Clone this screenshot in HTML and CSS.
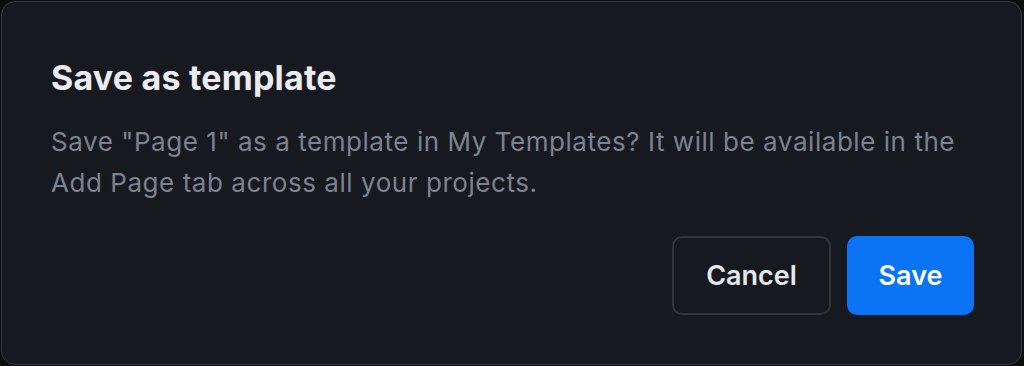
FILE: index.html
```html
<!DOCTYPE html>
<html lang="en">
<head>
  <meta charset="UTF-8" />
  <title>Save as template</title>
  <link rel="stylesheet" href="styles.css">
</head>
<body>
  <div class="backdrop">
    <div class="dialog">
      <h2 class="dialog-title">Save as template</h2>
      <p class="dialog-text">Save "Page 1" as a template in My Templates? It will be available in the Add Page tab across all your projects.</p>
      <div class="dialog-actions">
        <button class="btn btn-secondary">Cancel</button>
        <button class="btn btn-primary">Save</button>
      </div>
    </div>
  </div>
</body>
</html>
```

FILE: styles.css
```css
* {
  box-sizing: border-box;
  margin: 0;
  padding: 0;
}

body {
  font-family: Inter, 'Noto Sans', sans-serif;
  background: #0c0d10;
  width: 1024px;
  height: 366px;
  overflow: hidden;
}

.backdrop {
  padding: 1px 2px 1px 1px;
}

.dialog {
  height: 364px;
  background: #171920;
  border: 1px solid #383a40;
  border-radius: 14px;
  padding: 54px 47px 49px 49px;
  display: flex;
  flex-direction: column;
}

.dialog-title {
  font-size: 34px;
  line-height: 44px;
  font-weight: 700;
  letter-spacing: 0.2px;
  color: #ececf0;
}

.dialog-text {
  margin-top: 21px;
  max-width: 925px;
  font-size: 26px;
  line-height: 41px;
  letter-spacing: 0.55px;
  color: #7c8290;
}

.dialog-actions {
  margin-top: auto;
  display: flex;
  justify-content: flex-end;
  gap: 16px;
}

.btn {
  height: 79px;
  border-radius: 10px;
  font-family: inherit;
  font-size: 27px;
  font-weight: 600;
  cursor: pointer;
}

.btn-secondary {
  width: 159px;
  background: transparent;
  border: 2px solid #33353b;
  color: #e8e8ec;
}

.btn-primary {
  width: 127px;
  background: #0a74f4;
  border: none;
  color: #fff;
}
```
